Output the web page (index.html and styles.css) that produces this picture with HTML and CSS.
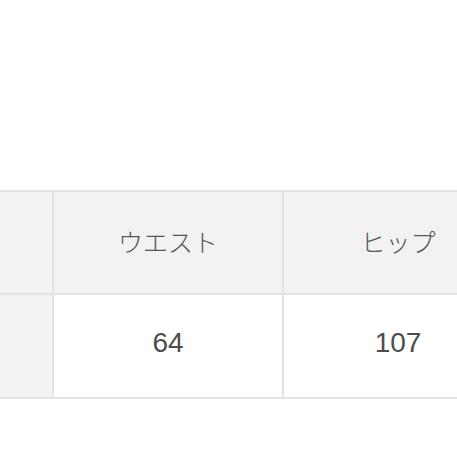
FILE: index.html
```html
<!DOCTYPE html>
<html lang="ja">
<head>
<meta charset="utf-8">
<link rel="stylesheet" href="styles.css">
</head>
<body>
<div class="page">
  <div class="table">
    <div class="cell head side"></div>
    <div class="cell head">ウエスト</div>
    <div class="cell head">ヒップ</div>
    <div class="cell side"></div>
    <div class="cell">64</div>
    <div class="cell">107</div>
  </div>
</div>
</body>
</html>
```
FILE: styles.css
```css
html, body {
  margin: 0;
  padding: 0;
  background: #ffffff;
}
.page {
  width: 457px;
  height: 457px;
  overflow: hidden;
  padding-top: 190px;
  box-sizing: border-box;
}
.table {
  display: grid;
  grid-template-columns: 52px 228px 228px;
  grid-template-rows: 101px 102px;
  gap: 2px;
  background: #e3e3e3;
  border-top: 2px solid #e3e3e3;
  border-bottom: 2px solid #e3e3e3;
  width: 512px;
  font-family: "Liberation Sans", "Noto Sans CJK JP", sans-serif;
  color: #4d4d4d;
}
.cell {
  background: #ffffff;
  display: flex;
  align-items: center;
  justify-content: center;
  font-size: 28px;
  padding-bottom: 6px;
  box-sizing: border-box;
}
.head {
  background: #f2f2f2;
  font-family: "Noto Sans CJK JP", sans-serif;
  font-size: 25px;
  font-weight: 300;
  color: #555555;
  padding-bottom: 4px;
}
.side {
  background: #f2f2f2;
}
```
